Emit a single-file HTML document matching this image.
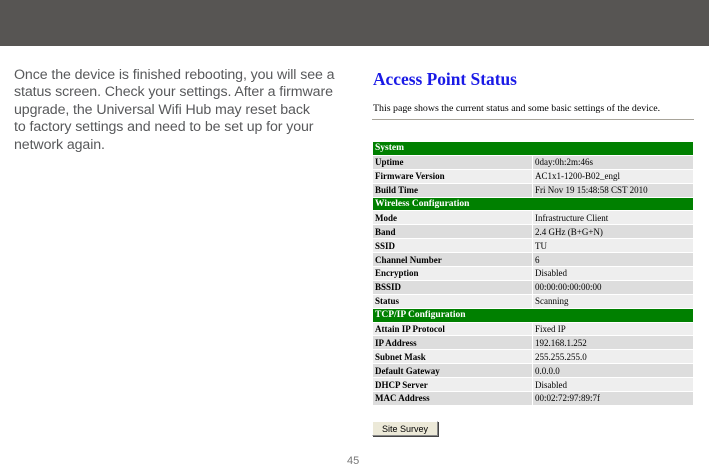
<!DOCTYPE html>
<html><head><style>
body{margin:0;width:709px;height:467px;background:#fff;position:relative;overflow:hidden}
#bar{position:absolute;left:0;top:0;width:709px;height:46px;background:#575553}
#txt{position:absolute;left:14px;top:67px;white-space:nowrap;font:14.2px/17.4px "Liberation Sans",sans-serif;color:#58595b;letter-spacing:-0.1px}
h1{position:absolute;left:373px;top:69px;margin:0;font:bold 17.4px "Liberation Serif",serif;color:#1a1ae6}
#desc{position:absolute;left:373px;top:103px;font:9.9px "Liberation Serif",serif;color:#000;white-space:nowrap}
#hr{position:absolute;left:372px;top:119px;width:322px;height:1px;background:#a8a49a}
table{position:absolute;left:372px;top:141px;width:322px;border-collapse:collapse;font:9px "Liberation Serif",serif}
td{height:13.9px;padding:0 0 0 2px;box-sizing:border-box;border:1px solid #fff;line-height:12px}
td.l{font-weight:bold;width:160px}
tr.h td{background:#008000;color:#fff;font-weight:bold;font-size:9.5px}
tr.a td{background:#ddd}
tr.b td{background:#eee}
#btn{position:absolute;left:372px;top:421px;width:66px;height:15px;background:#ece9d8;border:1px solid #888;border-top-color:#fff;border-left-color:#fff;box-shadow:1px 1px 0 #444;font:9px "Liberation Sans",sans-serif;text-align:center;line-height:15px;box-sizing:border-box}
#pn{position:absolute;left:347px;top:455px;font:11px "Liberation Sans",sans-serif;color:#777}
</style></head><body>
<div id="bar"></div>
<div id="txt">Once the device is finished rebooting, you will see a<br>status screen. Check your settings. After a firmware<br>upgrade, the Universal Wifi Hub may reset back<br>to factory settings and need to be set up for your<br>network again.</div>
<h1>Access Point Status</h1>
<div id="desc">This page shows the current status and some basic settings of the device.</div>
<div id="hr"></div>
<table>
<tr class="h"><td colspan="2">System</td></tr>
<tr class="a"><td class="l">Uptime</td><td>0day:0h:2m:46s</td></tr>
<tr class="b"><td class="l">Firmware Version</td><td>AC1x1-1200-B02_engl</td></tr>
<tr class="a"><td class="l">Build Time</td><td>Fri Nov 19 15:48:58 CST 2010</td></tr>
<tr class="h"><td colspan="2">Wireless Configuration</td></tr>
<tr class="b"><td class="l">Mode</td><td>Infrastructure Client</td></tr>
<tr class="a"><td class="l">Band</td><td>2.4 GHz (B+G+N)</td></tr>
<tr class="b"><td class="l">SSID</td><td>TU</td></tr>
<tr class="a"><td class="l">Channel Number</td><td>6</td></tr>
<tr class="b"><td class="l">Encryption</td><td>Disabled</td></tr>
<tr class="a"><td class="l">BSSID</td><td>00:00:00:00:00:00</td></tr>
<tr class="b"><td class="l">Status</td><td>Scanning</td></tr>
<tr class="h"><td colspan="2">TCP/IP Configuration</td></tr>
<tr class="b"><td class="l">Attain IP Protocol</td><td>Fixed IP</td></tr>
<tr class="a"><td class="l">IP Address</td><td>192.168.1.252</td></tr>
<tr class="b"><td class="l">Subnet Mask</td><td>255.255.255.0</td></tr>
<tr class="a"><td class="l">Default Gateway</td><td>0.0.0.0</td></tr>
<tr class="b"><td class="l">DHCP Server</td><td>Disabled</td></tr>
<tr class="a"><td class="l">MAC Address</td><td>00:02:72:97:89:7f</td></tr>
</table>
<div id="btn">Site Survey</div>
<div id="pn">45</div>
</body></html>
